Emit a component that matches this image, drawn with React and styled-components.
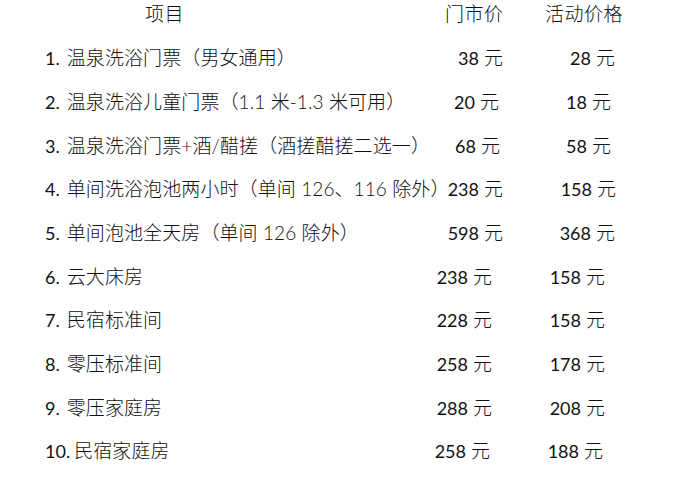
import React from 'react';
import styled, { createGlobalStyle } from 'styled-components';

const Global = createGlobalStyle`
    html, body {
        margin: 0;
        padding: 0;
        background: #fff;
    }
    body {
        font-family: Lato, "Noto Sans CJK SC", sans-serif;
        color: #111;
    }
`;

const Sheet = styled.main`
    width: 687px;
    height: 479px;
    overflow: hidden;
    padding-left: 45px;
    box-sizing: border-box;
`;

const HeaderRow = styled.div`
    display: grid;
    grid-template-columns: 400px 100px 150px;
    height: 27px;
    line-height: 27px;
    margin-bottom: 8px;
    font-size: 19px;
    font-weight: 300;
    white-space: nowrap;
`;

const Row = styled.div`
    display: grid;
    grid-template-columns: 400px 100px 150px;
    height: 43.67px;
    align-items: center;
    font-size: 19px;
    font-weight: 300;
`;

const ItemHead = styled.div`
    padding-left: 100px;
    letter-spacing: 0.5px;
`;

const PriceHead = styled.div`
    text-align: right;
    padding-right: ${p => p.$pad}px;
    letter-spacing: 0.5px;
`;

const Item = styled.div`
    white-space: nowrap;
    letter-spacing: 0.1px;
`;

const Num = styled.span`
    font-weight: 400;
    font-size: 18px;
    letter-spacing: 0;
    margin-right: ${p => p.$gap}px;
`;

const Price = styled.div`
    display: flex;
    justify-content: flex-end;
    align-items: baseline;
    white-space: nowrap;
    padding-right: ${p => p.$pad}px;
`;

const Digits = styled.span`
    font-weight: 400;
    font-size: 18px;
    margin-right: 5px;
`;

const rows = [
    { n: '1.', name: '温泉洗浴门票（男女通用）', a: '38', b: '28', pa: 42, pb: 80 },
    { n: '2.', name: '温泉洗浴儿童门票（1.1 米-1.3 米可用）', a: '20', b: '18', pa: 46, pb: 84 },
    { n: '3.', name: '温泉洗浴门票+酒/醋搓（酒搓醋搓二选一）', a: '68', b: '58', pa: 45, pb: 84 },
    { n: '4.', name: '单间洗浴泡池两小时（单间 126、116 除外）', a: '238', b: '158', pa: 42, pb: 79 },
    { n: '5.', name: '单间泡池全天房（单间 126 除外）', a: '598', b: '368', pa: 42, pb: 80 },
    { n: '6.', name: '云大床房', a: '238', b: '158', pa: 53, pb: 90 },
    { n: '7.', name: '民宿标准间', a: '228', b: '158', pa: 53, pb: 90 },
    { n: '8.', name: '零压标准间', a: '258', b: '178', pa: 53, pb: 90 },
    { n: '9.', name: '零压家庭房', a: '288', b: '208', pa: 53, pb: 90 },
    { n: '10.', name: '民宿家庭房', a: '258', b: '188', pa: 55, pb: 92 },
];

const App = () =>
    <>
        <Global />
        <Sheet>
            <HeaderRow>
                <ItemHead>项目</ItemHead>
                <PriceHead $pad={42}>门市价</PriceHead>
                <PriceHead $pad={72}>活动价格</PriceHead>
            </HeaderRow>
            {rows.map(r =>
                <Row key={r.n}>
                    <Item>
                        <Num $gap={r.n.length > 2 ? 4 : 7}>{r.n}</Num>
                        {r.name}
                    </Item>
                    <Price $pad={r.pa}><Digits>{r.a}</Digits>元</Price>
                    <Price $pad={r.pb}><Digits>{r.b}</Digits>元</Price>
                </Row>
            )}
        </Sheet>
    </>
;

export default App;
